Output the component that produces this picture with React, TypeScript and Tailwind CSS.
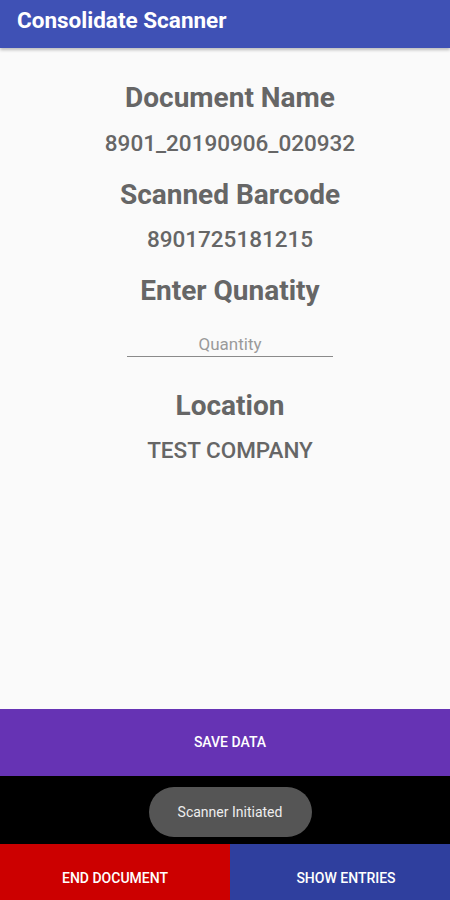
export default function App() {
    return (
        <div className="w-[450px] h-[900px] flex flex-col bg-[#fafafa] font-['Roboto',sans-serif] overflow-hidden">
            {/* App Bar */}
            <div className="h-[48px] shrink-0 bg-[#3f51b5] flex items-center px-[17px] pb-[8px] shadow-[0_2px_3px_rgba(0,0,0,0.25)] z-10">
                <h1 className="text-white text-[22.5px] font-bold leading-none">Consolidate Scanner</h1>
            </div>

            {/* Content */}
            <div className="flex-1 flex flex-col items-center text-[#666666] pt-[34px] pl-[10px]">
                <h2 className="text-[28px] font-bold leading-[32px]">Document Name</h2>
                <p className="text-[22.5px] font-medium leading-[26px] mt-[16px]">8901_20190906_020932</p>
                <h2 className="text-[28px] font-bold leading-[32px] mt-[23px]">Scanned Barcode</h2>
                <p className="text-[22.5px] font-medium leading-[26px] mt-[15px]">8901725181215</p>
                <h2 className="text-[28px] font-bold leading-[32px] mt-[23px]">Enter Qunatity</h2>

                {/* Quantity input */}
                <div className="w-[206px] mt-[26px] border-b-[1.5px] border-[#8a8a8a] flex justify-center pb-[1px]">
                    <input
                        type="text"
                        placeholder="Quantity"
                        className="w-full text-center text-[17px] leading-[22px] bg-transparent outline-none placeholder:text-[#9a9a9a] text-[#444]"
                    />
                </div>

                <h2 className="text-[28px] font-bold leading-[32px] mt-[33px]">Location</h2>
                <p className="text-[22.5px] font-medium leading-[26px] mt-[15px]">TEST COMPANY</p>
            </div>

            {/* Save Data */}
            <button className="h-[67px] shrink-0 bg-[#6633b4] pl-[10px] text-white text-[14px] font-medium uppercase">
                SAVE DATA
            </button>

            {/* Toast area */}
            <div className="h-[68px] shrink-0 bg-black flex items-center justify-center pl-[10px] pt-[4px]">
                <div className="w-[163px] h-[50px] rounded-full bg-[#555555] flex items-center justify-center text-[#eeeeee] text-[14px]">
                    Scanner Initiated
                </div>
            </div>

            {/* Bottom actions (cut off by the screen edge) */}
            <div className="h-[56px] shrink-0 flex">
                <button className="w-[230px] bg-[#cc0000] pt-[12px] text-white text-[14px] font-medium uppercase">
                    END DOCUMENT
                </button>
                <button className="flex-1 bg-[#2f3f9e] pt-[12px] pl-[12px] text-white text-[14px] font-medium uppercase">
                    SHOW ENTRIES
                </button>
            </div>
        </div>
    );
}
